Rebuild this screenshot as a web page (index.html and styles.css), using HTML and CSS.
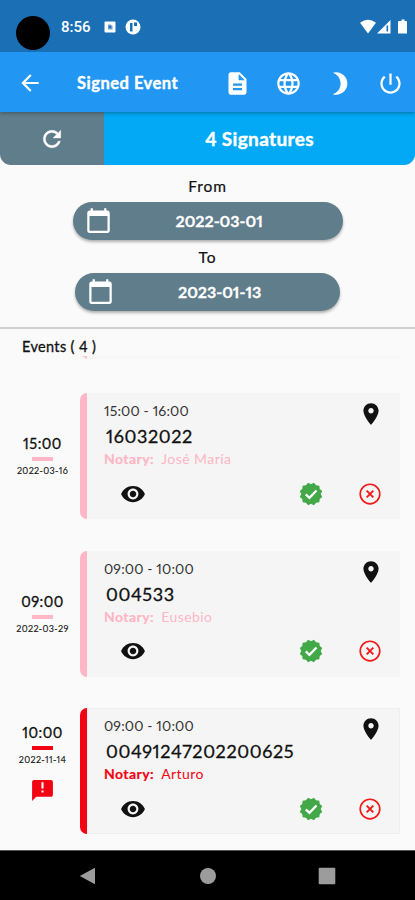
FILE: index.html
```html
<!DOCTYPE html>
<html lang="en">
<head>
<meta charset="utf-8">
<title>Signed Event</title>
<link rel="stylesheet" href="styles.css">
</head>
<body>
<svg class="defs" aria-hidden="true">
  <symbol id="cal" viewBox="0 0 24 24"><path d="M20 3h-1V1h-2v2H7V1H5v2H4c-1.1 0-2 .9-2 2v16c0 1.1.9 2 2 2h16c1.1 0 2-.9 2-2V5c0-1.1-.9-2-2-2zm0 18H4V8h16v13z"/></symbol>
  <symbol id="eye" viewBox="0 0 24 24"><path d="M12 4.5C7 4.5 2.73 7.61 1 12c1.73 4.39 6 7.5 11 7.5s9.27-3.11 11-7.5c-1.73-4.39-6-7.5-11-7.5zM12 17c-2.76 0-5-2.24-5-5s2.24-5 5-5 5 2.24 5 5-2.24 5-5 5zm0-8c-1.66 0-3 1.34-3 3s1.34 3 3 3 3-1.34 3-3-1.34-3-3-3z"/></symbol>
  <symbol id="pin" viewBox="0 0 24 24"><path d="M12 2C8.13 2 5 5.13 5 9c0 5.25 7 13 7 13s7-7.75 7-13c0-3.87-3.13-7-7-7zm0 9.5c-1.38 0-2.5-1.12-2.5-2.5s1.12-2.5 2.5-2.5 2.5 1.12 2.5 2.5-1.12 2.5-2.5 2.5z"/></symbol>
  <symbol id="ok" viewBox="0 0 24 24"><path d="M12 2.7L14.75 1.2 16.9 3.5 20 4 20.4 7.1 22.8 9.2 21.3 12 22.8 14.8 20.4 16.9 20 20 16.9 20.5 14.75 22.8 12 21.3 9.25 22.8 7.1 20.5 4 20 3.6 16.9 1.2 14.8 2.7 12 1.2 9.2 3.6 7.1 4 4 7.1 3.5 9.25 1.2z"/><path d="M7 12.3l3.5 3.4 6.8-7" fill="none" stroke="#fff" stroke-width="2.2"/></symbol>
  <symbol id="no" viewBox="0 0 24 24"><path fill="none" stroke="currentColor" stroke-width="1.6" d="M12 2.6a9.4 9.4 0 1 0 0 18.8a9.4 9.4 0 1 0 0-18.8z"/><path fill="none" stroke="currentColor" stroke-width="1.9" d="M8.8 8.8l6.4 6.4M15.2 8.8l-6.4 6.4"/></symbol>
</svg>

<div class="status">
  <span class="camera"></span>
  <span class="clock">8:56</span>
  <svg class="note-a" viewBox="0 0 12 12"><rect x=".5" y=".5" width="11" height="11" rx="1" fill="#fff"/><path d="M4 3.5h2.7L8.5 5v3.5H4z" fill="#6f9fce"/><path d="M5 5h2v2H5z" fill="#1a6fb5"/></svg>
  <svg class="note-b" viewBox="0 0 16 16"><circle cx="8" cy="8" r="7.5" fill="#fff"/><path d="M5 4h2.5v8.5H5zM9 3.5h3v3.5H9z" fill="#1a6fb5"/></svg>
  <svg class="signals" viewBox="0 0 48 16"><path d="M0 3.7Q8-2.2 16 3.7L8 14.5z" fill="#fff"/><path d="M30.5 1v13.5H17z" fill="#fff"/><path d="M27.3 6.5v6" stroke="#1a6fb5" stroke-width="1.6"/><path d="M40 2h1.5V.5h3V2H46q1 0 1 1v11.5h-9V3q0-1 1-1z" fill="#fff"/></svg>
</div>

<header class="appbar">
  <svg class="icon back" viewBox="0 0 24 24"><path d="M20 11H7.83l5.59-5.59L12 4l-8 8 8 8 1.41-1.41L7.83 13H20v-2z"/></svg>
  <h1>Signed Event</h1>
  <nav>
    <svg class="icon" viewBox="0 0 24 24"><path d="M14 2H6c-1.1 0-1.99.9-1.99 2L4 20c0 1.1.89 2 1.99 2H18c1.1 0 2-.9 2-2V8l-6-6zm2 16H8v-2h8v2zm0-4H8v-2h8v2zm-3-5V3.5L18.5 9H13z"/></svg>
    <svg class="icon" viewBox="0 0 24 24"><path d="M11.99 2C6.47 2 2 6.48 2 12s4.47 10 9.99 10C17.52 22 22 17.52 22 12S17.52 2 11.99 2zm6.93 6h-2.95c-.32-1.25-.78-2.45-1.38-3.56 1.84.63 3.37 1.91 4.33 3.56zM12 4.04c.83 1.2 1.48 2.53 1.91 3.96h-3.82c.43-1.43 1.08-2.76 1.91-3.96zM4.26 14C4.1 13.36 4 12.69 4 12s.1-1.36.26-2h3.38c-.08.66-.14 1.32-.14 2 0 .68.06 1.34.14 2H4.26zm.82 2h2.95c.32 1.25.78 2.45 1.38 3.56-1.84-.63-3.37-1.9-4.33-3.56zm2.95-8H5.08c.96-1.66 2.49-2.93 4.33-3.56C8.81 5.55 8.35 6.75 8.03 8zM12 19.96c-.83-1.2-1.48-2.53-1.91-3.96h3.82c-.43 1.43-1.08 2.76-1.91 3.96zM14.34 14H9.66c-.09-.66-.16-1.32-.16-2 0-.68.07-1.35.16-2h4.68c.09.65.16 1.32.16 2 0 .68-.07 1.34-.16 2zm.25 5.56c.6-1.11 1.06-2.31 1.38-3.56h2.95c-.96 1.65-2.49 2.93-4.33 3.56zM16.36 14c.08-.66.14-1.32.14-2 0-.68-.06-1.34-.14-2h3.38c.16.64.26 1.31.26 2s-.1 1.36-.26 2h-3.38z"/></svg>
    <svg class="icon" viewBox="0 0 24 24"><path d="M9 2c-1.05 0-2.05.16-3 .46 4.06 1.27 7 5.06 7 9.54 0 4.48-2.94 8.27-7 9.54.95.3 1.95.46 3 .46 5.52 0 10-4.48 10-10S14.52 2 9 2z"/></svg>
    <svg class="icon" viewBox="0 0 24 24"><path d="M13 3h-2v10h2V3zm4.83 2.17l-1.42 1.42C17.99 7.86 19 9.81 19 12c0 3.87-3.13 7-7 7s-7-3.13-7-7c0-2.19 1.01-4.14 2.58-5.42L6.17 5.17C4.23 6.82 3 9.26 3 12c0 4.97 4.03 9 9 9s9-4.03 9-9c0-2.74-1.23-5.18-3.17-6.83z"/></svg>
  </nav>
</header>

<div class="tabs">
  <div class="refresh"><svg class="icon" viewBox="0 0 24 24"><path d="M17.65 6.35C16.2 4.9 14.21 4 12 4c-4.42 0-7.99 3.58-7.99 8s3.57 8 7.99 8c3.73 0 6.84-2.55 7.73-6h-2.08c-.82 2.33-3.04 4-5.65 4-3.31 0-6-2.69-6-6s2.69-6 6-6c1.66 0 3.14.69 4.22 1.78L13 11h7V4l-2.35 2.35z"/></svg></div>
  <div class="count"><span>4 Signatures</span></div>
</div>

<section class="filters">
  <div class="label"><span>From</span></div>
  <div class="pill from"><svg class="icon"><use href="#cal"/></svg><span>2022-03-01</span></div>
  <div class="label to-label"><span>To</span></div>
  <div class="pill to"><svg class="icon"><use href="#cal"/></svg><span>2023-01-13</span></div>
</section>

<main>
  <h2>Events ( 4 )</h2>
  <div class="clipped"><i></i></div>

  <article class="event">
    <div class="when"><b>15:00</b><i class="bar"></i><small>2022-03-16</small></div>
    <div class="card">
      <div class="top"><span class="range">15:00 - 16:00</span><svg class="icon pin"><use href="#pin"/></svg></div>
      <div class="code">16032022</div>
      <div class="notary"><b>Notary:</b><span>José María</span></div>
      <div class="actions"><svg class="icon eye"><use href="#eye"/></svg><svg class="icon ok"><use href="#ok"/></svg><svg class="icon no"><use href="#no"/></svg></div>
    </div>
  </article>

  <article class="event">
    <div class="when"><b>09:00</b><i class="bar"></i><small>2022-03-29</small></div>
    <div class="card">
      <div class="top"><span class="range">09:00 - 10:00</span><svg class="icon pin"><use href="#pin"/></svg></div>
      <div class="code">004533</div>
      <div class="notary"><b>Notary:</b><span>Eusebio</span></div>
      <div class="actions"><svg class="icon eye"><use href="#eye"/></svg><svg class="icon ok"><use href="#ok"/></svg><svg class="icon no"><use href="#no"/></svg></div>
    </div>
  </article>

  <article class="event urgent">
    <div class="when"><b>10:00</b><i class="bar"></i><small>2022-11-14</small>
      <svg class="icon alert" viewBox="0 0 24 24"><path d="M20 2H4c-1.1 0-1.99.9-1.99 2L2 22l4-4h14c1.1 0 2-.9 2-2V4c0-1.1-.9-2-2-2zm-7 12h-2v-2h2v2zm0-4h-2V4h2v6z"/></svg></div>
    <div class="card">
      <div class="top"><span class="range">09:00 - 10:00</span><svg class="icon pin"><use href="#pin"/></svg></div>
      <div class="code">00491247202200625</div>
      <div class="notary"><b>Notary:</b><span>Arturo</span></div>
      <div class="actions"><svg class="icon eye"><use href="#eye"/></svg><svg class="icon ok"><use href="#ok"/></svg><svg class="icon no"><use href="#no"/></svg></div>
    </div>
  </article>
</main>

<footer class="navbar">
  <svg viewBox="0 0 18 18"><path d="M16 .8v16.4L.8 9z"/></svg>
  <svg viewBox="0 0 18 18"><circle cx="9" cy="9" r="8"/></svg>
  <svg viewBox="0 0 18 18"><rect x=".7" y=".7" width="16.6" height="16.6" rx="1"/></svg>
</footer>
</body>
</html>
```
FILE: styles.css
```css
* { box-sizing: border-box; }

body {
  margin: 0;
  width: 415px;
  height: 900px;
  overflow: hidden;
  display: flex;
  flex-direction: column;
  background: #fafafa;
  color: #111;
  font-family: Lato, "Open Sans", sans-serif;
  font-variant-numeric: proportional-nums;
}

.defs { position: absolute; width: 0; height: 0; }

.icon { width: 26px; height: 26px; fill: currentColor; flex: none; display: block; }

.status {
  height: 52px;
  flex: none;
  display: flex;
  align-items: center;
  padding: 2px 7px 0 16px;
  background: #1a6fb5;
  color: #fff;
}
.camera { width: 34px; height: 34px; margin-top: 11px; border-radius: 50%; background: #000; }
.clock { width: 43px; margin-left: 11px; font: 500 15px/20px Roboto, sans-serif; }
.note-a { width: 12px; height: 12px; }
.note-b { width: 16px; height: 16px; margin-left: 9px; }
.signals { width: 48px; height: 16px; margin-left: auto; }

.appbar {
  height: 60px;
  flex: none;
  display: flex;
  align-items: center;
  padding: 2px 11px 0 17px;
  background: #2196f3;
  color: #fff;
  box-shadow: 0 1px 4px rgba(0, 0, 0, .35);
  clip-path: inset(0 0 -8px 0);
  position: relative;
}
.appbar h1 { margin: 0 0 0 34px; font-size: 16.5px; font-weight: 700; letter-spacing: .5px; line-height: 22px; white-space: nowrap; -webkit-text-stroke: .4px #fff; }
.appbar nav { display: flex; gap: 24px; margin-left: auto; }
.appbar nav .icon { width: 27px; height: 27px; }

.tabs {
  height: 53px;
  flex: none;
  display: flex;
  border-radius: 0 0 11px 11px;
  overflow: hidden;
  color: #fff;
}
.refresh { width: 104px; display: grid; place-items: center; background: #607d8b; }
.refresh .icon { stroke: #fff; stroke-width: .4px; }
.count { flex: 1; display: grid; place-items: center; background: #03a9f4; font-size: 19px; font-weight: 700; letter-spacing: .35px; -webkit-text-stroke: .4px #fff; }

.filters {
  height: 164px;
  flex: none;
  display: flex;
  flex-direction: column;
  align-items: center;
  padding-top: 10px;
  border-bottom: 2px solid #d0d0d0;
}
.label { height: 27px; font-size: 15.5px; line-height: 22px; -webkit-text-stroke: .2px #111; letter-spacing: .9px; }
.to-label { height: 33px; padding-top: 6px; }
.pill {
  height: 38px;
  display: flex;
  align-items: center;
  padding: 0 0 1px 12px;
  border-radius: 19px;
  background: #607d8b;
  color: #fff;
  box-shadow: 0 2px 3px rgba(0, 0, 0, .3);
  font-size: 16px;
  font-weight: 700;
  -webkit-text-stroke: .3px #fff;
}
.pill .icon { width: 27px; height: 27px; }
.pill span { margin-left: 64px; }
.pill.from { width: 270px; }
.pill.to { width: 265px; }

main { flex: 1; min-height: 0; overflow: hidden; }
main h2 { margin: 0; padding: 8px 0 0 22px; height: 27px; font-size: 14.5px; line-height: 20px; font-weight: 400; letter-spacing: .35px; -webkit-text-stroke: .3px #111; }
.clipped { height: 3px; width: 320px; margin: 0 0 34px 80px; background: #f7f7f7; }
.clipped i { display: block; width: 5px; height: 3px; margin-left: 2px; background: #fec0cd; clip-path: polygon(0 0, 100% 0, 100% 100%); }

.event { --accent: #ffb6c6; height: 126px; display: flex; margin-bottom: 31.5px; }
.urgent { --accent: #f20413; }
.when { width: 80px; padding: 41px 0 0 5px; display: flex; flex-direction: column; align-items: center; }
.when b { font-size: 14.5px; line-height: 20px; font-weight: 400; -webkit-text-stroke: .3px #111; letter-spacing: .5px; }
.bar { width: 21px; height: 4px; margin: 3px 0 4px; background: var(--accent); }
.when small { font-size: 9px; line-height: 12px; letter-spacing: .35px; -webkit-text-stroke: .1px #222; }
.urgent .when { padding-top: 15px; }
.alert { width: 25px; height: 25px; margin-top: 12px; color: #f20413; }

.card {
  width: 320px;
  padding: 8px 16px 0 17px;
  border-left: 7px solid var(--accent);
  border-radius: 7px 0 0 7px;
  background: #f5f5f5;
}
.urgent .card { box-shadow: inset 0 0 0 1px #efedee; }
.top { display: flex; justify-content: space-between; height: 22px; }
.range { font-size: 14px; line-height: 20px; color: #333; letter-spacing: .15px; }
.code { padding-left: 2px; height: 26px; font-size: 18px; line-height: 26px; letter-spacing: .62px; -webkit-text-stroke: .3px #111; }
.notary { display: flex; gap: 7px; height: 20px; font-size: 14px; line-height: 20px; letter-spacing: .45px; color: var(--accent); }
.notary b { -webkit-text-stroke: .2px var(--accent); }
.notary span { letter-spacing: .45px; }
.actions { display: flex; align-items: center; height: 49px; padding-left: 16px; }
.ok { margin-left: 152px; color: #43a847; }
.no { margin-left: 33px; color: #f21b1b; }
.ok, .no { padding: .5px; }

.navbar {
  height: 50px;
  flex: none;
  display: flex;
  align-items: center;
  justify-content: space-between;
  padding: 0 79px;
  background: #000;
  border-top: 1px solid #555;
}
.navbar svg { width: 18px; height: 18px; fill: #9c9c9c; }
```
